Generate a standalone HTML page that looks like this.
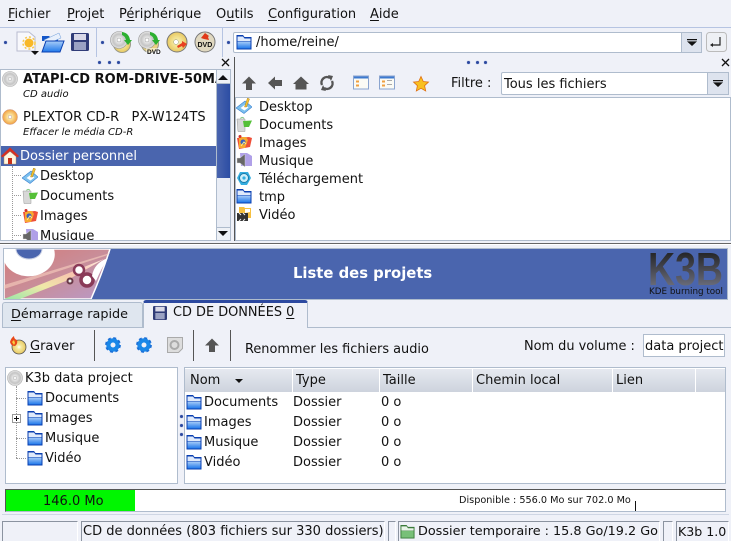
<!DOCTYPE html>
<html><head><meta charset="utf-8">
<style>
html,body{margin:0;padding:0}
body{width:731px;height:541px;overflow:hidden;background:#eff1f8;position:relative;font-family:"DejaVu Sans",sans-serif;font-size:13px;color:#111}
.t{position:absolute;white-space:pre;line-height:16px;height:16px;margin-top:1px}
.b{position:absolute;box-sizing:border-box}
.w{background:#fff;border:1px solid #afbccd}
svg.i{position:absolute;overflow:visible}
.d{position:absolute;width:3px;height:3px;border-radius:50%;background:#2c49a0;box-shadow:0 0 1px #6a80c0}
u{text-underline-offset:2px}
.hd{position:absolute;top:369px;height:23px;background:linear-gradient(#e6e9f0,#cdd3dd);border-right:1px solid #fff;box-sizing:border-box}
.ar{position:absolute;width:0;height:0;border-left:5px solid transparent;border-right:5px solid transparent}
</style></head><body>
<svg width="0" height="0" style="position:absolute">
<defs>
<linearGradient id="fb" x1="0" y1="0" x2="0" y2="1"><stop offset="0" stop-color="#a9cdf8"/><stop offset="1" stop-color="#1f78ea"/></linearGradient>
<radialGradient id="cg"><stop offset="0" stop-color="#fff"/><stop offset=".3" stop-color="#e6e6e6"/><stop offset=".7" stop-color="#c4c4c4"/><stop offset="1" stop-color="#e8e8e8"/></radialGradient>
<radialGradient id="cy"><stop offset="0" stop-color="#fff"/><stop offset=".3" stop-color="#f5e9a0"/><stop offset="1" stop-color="#e8c860"/></radialGradient>
<radialGradient id="co"><stop offset="0" stop-color="#fff"/><stop offset=".3" stop-color="#fbe6a0"/><stop offset="1" stop-color="#f0a040"/></radialGradient>
<linearGradient id="lg" x1="0" y1="0" x2="0" y2="1"><stop offset="0" stop-color="#111"/><stop offset="1" stop-color="#7c7f90"/></linearGradient>
<linearGradient id="pk" x1="0" y1="0" x2="1" y2="1"><stop offset="0" stop-color="#d47a78"/><stop offset=".5" stop-color="#c98d98"/><stop offset="1" stop-color="#b99ac8"/></linearGradient>
<linearGradient id="fl" x1="0" y1="1" x2="1" y2="0"><stop offset="0" stop-color="#9ae8a8"/><stop offset=".35" stop-color="#f0e8a8"/><stop offset=".7" stop-color="#f8c0b0"/><stop offset="1" stop-color="#fff0e0"/></linearGradient>
<symbol id="folder" viewBox="0 0 16 16"><path d="M.5 1h6.5l1.5 2H15.5v12.5H.5z" fill="#0a3fb0"/><path d="M1.5 2.5h5.5l1.5 2H14.500v2.500h-13z" fill="#dfeafb"/><path d="M1.500 7.500h13v7h-13z" fill="url(#fb)"/></symbol>
<symbol id="cd" viewBox="0 0 16 16"><circle cx="8" cy="8" r="7.5" fill="url(#cg)" stroke="#aaa" stroke-width=".6"/><circle cx="8" cy="8" r="1.800" fill="#f4f4f4" stroke="#aaa" stroke-width=".5"/></symbol>
<symbol id="cdo" viewBox="0 0 16 16"><circle cx="8" cy="8" r="7.5" fill="url(#co)" stroke="#c98" stroke-width=".5"/><circle cx="8" cy="8" r="1.800" fill="#fff" stroke="#b98" stroke-width=".5"/></symbol>
<symbol id="up" viewBox="0 0 16 16"><path d="M8 1.5L15 8.5H11V15H5V8.5H1z" fill="#555"/></symbol>
<symbol id="gear" viewBox="0 0 16 16"><circle cx="8" cy="8" r="4.600" fill="none" stroke="#1a88e8" stroke-width="4.200"/><circle cx="8" cy="8" r="7" fill="none" stroke="#1a70d8" stroke-width="1.800" stroke-dasharray="3 2.500"/></symbol>
<symbol id="dn" viewBox="0 0 10 7"><path d="M0 0h10v1.300H0zM0 2.400h10L5 7z" fill="#111"/></symbol>
<symbol id="desk" viewBox="0 0 16 16"><path d="M0 10L9 3l7 6-8 6.500z" fill="#7cc0ee" stroke="#3a80d0" stroke-width=".6"/><path d="M4.500 10l4-3 4 2.500-4 3z" fill="#fff"/><path d="M8.500 9l3-9 2 1-3 8z" fill="#f0c030" stroke="#a07010" stroke-width=".4"/></symbol>
<symbol id="docs" viewBox="0 0 16 16"><path d="M4.500 2.500a2 2 0 0 1 3.500 0" fill="none" stroke="#8c8" stroke-width="1.100"/><path d="M1 3h8v12.500H2z" fill="#d8d8d8" stroke="#999" stroke-width=".5"/><path d="M7 5l9-.5-3 6.500H8z" fill="#55c038"/></symbol>
<symbol id="imgs" viewBox="0 0 16 16"><path d="M1 4l12-1 3 1-2 9-11 2z" fill="#ef4f38"/><path d="M3 3h7l2 3-3 8H3z" fill="#f7a830"/><circle cx="7" cy="8" r="2.500" fill="#3860c0"/><circle cx="4" cy="2.500" r="1.500" fill="#d03030"/><path d="M5 12l3-4 2 2" stroke="#fe8" fill="none"/></symbol>
<symbol id="mus" viewBox="0 0 16 16"><path d="M4 1h7l5 3v10H5z" fill="#b0a0e8"/><path d="M1 6h3l5-4v13l-5-4H1z" fill="#666" stroke="#ddd" stroke-width=".4"/></symbol>
<symbol id="dl" viewBox="0 0 16 16"><path d="M1 8l3-6h8l3 6-4 7H5z" fill="#35aee0"/><circle cx="8" cy="8" r="4.500" fill="#cdeefa" stroke="#1878a8"/><circle cx="8" cy="8" r="1.600" fill="#35aee0"/></symbol>
<symbol id="vid" viewBox="0 0 16 16"><path d="M3 1h5l1 1h6v10H3z" fill="#f6c040"/><path d="M1 7h11v8H1z" fill="#333"/><path d="M3 7l2 2M7 7l2 2M3 15l2-2M7 15l2-2" stroke="#eee"/><path d="M9 3h5v3l-5 1z" fill="#fff"/></symbol>
<symbol id="home" viewBox="0 0 18 18"><path d="M9 .5L18 9l-1.500 1.500L9 4 1.500 10.500 0 9z" fill="#d83020"/><path d="M3 9.500L9 4.500l6 5V17H3z" fill="#fff6e0" stroke="#c09050" stroke-width=".4"/><path d="M7 11h4v6H7z" fill="#c83018"/></symbol>
<symbol id="win" viewBox="0 0 16 14"><rect x=".5" y=".5" width="15" height="13" fill="#fbfbf5" stroke="#8aa4cf"/><rect x="1" y="1" width="14" height="2" fill="#3d7ad0"/><path d="M3 5h3v2H3zM3 9h3v2H3z" fill="#f0a040"/></symbol>
</defs></svg>

<!-- menu -->
<span class="t" style="left:8px;top:6px"><u>F</u>ichier</span>
<span class="t" style="left:67px;top:6px"><u>P</u>rojet</span>
<span class="t" style="left:119px;top:6px">P<u>é</u>riphérique</span>
<span class="t" style="left:216px;top:6px">O<u>u</u>tils</span>
<span class="t" style="left:268px;top:6px"><u>C</u>onfiguration</span>
<span class="t" style="left:370px;top:6px"><u>A</u>ide</span>
<div class="b" style="left:0;top:27px;width:731px;height:1px;background:#b6c4e2"></div>

<!-- main toolbar -->
<div class="b" style="left:96px;top:28px;width:1px;height:29px;background:#b6c4e2"></div>
<div class="b" style="left:222px;top:28px;width:1px;height:29px;background:#b6c4e2"></div>
<div class="d" style="left:4px;top:41px"></div><div class="d" style="left:101px;top:41px"></div><div class="d" style="left:227px;top:41px"></div>
<svg class="i" style="left:16px;top:31px" width="24" height="24" viewBox="0 0 24 24"><path d="M1 1h12l6 5v14H1z" fill="#f8f8fc" stroke="#b8bcd0"/><circle cx="13" cy="12" r="4.500" fill="#f8b828"/><circle cx="13" cy="12" r="6" fill="none" stroke="#f8c848" stroke-width="1.500" stroke-dasharray="2 2"/><path d="M15 20h8l-4 4z" fill="#111"/></svg>
<svg class="i" style="left:41px;top:32px" width="23" height="21" viewBox="0 0 23 21"><path d="M1 4h7l2 2h7v3H1z" fill="#1456c8"/><path d="M3 8L18 1l2 5L6 12z" fill="#e8f0fc" stroke="#6a9ad8" stroke-width=".5"/><path d="M1 20L5 9h18l-4 11z" fill="url(#fb)" stroke="#0a3fb0"/></svg>
<svg class="i" style="left:71px;top:33px" width="18" height="18" viewBox="0 0 18 18"><rect width="18" height="18" rx="1.500" fill="#303c78"/><rect x="3" y="1" width="12" height="6" fill="#d8d8e8"/><rect x="3" y="9" width="12" height="8" fill="#9aa2c4"/></svg>
<svg class="i" style="left:110px;top:31px" width="22" height="22" viewBox="0 0 22 22"><circle cx="12" cy="13" r="8.500" fill="url(#cy)" stroke="#998"/><circle cx="9" cy="9" r="8.500" fill="url(#cg)" stroke="#999" stroke-width=".6"/><circle cx="9" cy="9" r="2" fill="#fff" stroke="#999" stroke-width=".5"/><path d="M12 1q7 1 8 8l2 0-4 5-4-5h2q-1-4-4-5z" fill="#2cb030"/></svg>
<svg class="i" style="left:138px;top:31px" width="24" height="23" viewBox="0 0 24 23"><circle cx="12" cy="13" r="8.500" fill="#e8d080" stroke="#998"/><circle cx="9" cy="9" r="8.500" fill="url(#cg)" stroke="#999" stroke-width=".6"/><circle cx="9" cy="9" r="2" fill="#fff" stroke="#999" stroke-width=".5"/><path d="M12 1q7 1 8 8l2 0-4 5-4-5h2q-1-4-4-5z" fill="#2cb030"/><rect x="8" y="17" width="15" height="6" fill="#fff" fill-opacity=".5"/><text x="9" y="23" font-family="Liberation Sans" font-weight="bold" font-size="6.500" fill="#111">DVD</text></svg>
<svg class="i" style="left:166px;top:31px" width="22" height="22" viewBox="0 0 22 22"><circle cx="11" cy="11" r="10" fill="url(#cy)" stroke="#777"/><circle cx="10" cy="11" r="2.400" fill="#fff" stroke="#997" stroke-width=".5"/><path d="M11 15l5-3 0-2 5 3-4 4-1-2-4 2z" fill="#e84020"/></svg>
<svg class="i" style="left:194px;top:31px" width="22" height="22" viewBox="0 0 22 22"><circle cx="11" cy="11" r="10" fill="#e0d8c0" stroke="#777"/><path d="M7 7l4-5 4 3-1 1 1 3-5-1z" fill="#e03818"/><text x="3.500" y="16" font-family="Liberation Sans" font-weight="bold" font-size="7" fill="#111">DVD</text></svg>

<!-- address bar -->
<div class="b w" style="left:233px;top:32px;width:469px;height:21px;border-radius:2px"></div>
<svg class="i" style="left:236px;top:34px" width="16" height="16"><use href="#folder"/></svg>
<span class="t" style="left:256px;top:34px">/home/reine/</span>
<div class="b" style="left:681px;top:32px;width:21px;height:21px;background:#dde3ee;border:1px solid #afbccd"></div>
<svg class="i" style="left:687px;top:39px" width="10" height="7"><use href="#dn"/></svg>
<svg class="i" style="left:706px;top:32px" width="21" height="20" viewBox="0 0 21 20"><rect x=".5" y=".5" width="20" height="19" rx="3" fill="#eef0f4" stroke="#bbb"/><path d="M14 5v8H6" fill="none" stroke="#222" stroke-width="1.200"/><path d="M7 11v4l-3-2z" fill="#222"/></svg>

<!-- left dock -->
<div class="d" style="left:98px;top:61px"></div><div class="d" style="left:108px;top:61px"></div><div class="d" style="left:117px;top:61px"></div>
<svg class="i" style="left:221px;top:58px" width="9" height="9"><path d="M1 1l7 7M8 1L1 8" stroke="#111" stroke-width="1.300"/></svg>
<div class="b" style="left:0;top:69px;width:231px;height:172px;background:#fff;border:1px solid #afbccd;overflow:hidden"></div>
<svg class="i" style="left:2px;top:71px" width="16" height="16"><use href="#cd"/></svg>
<span class="t" style="left:23px;top:71px;font-weight:bold;width:193px;overflow:hidden">ATAPI-CD ROM-DRIVE-50MAX</span>
<span class="t" style="left:23px;top:86px;font-style:italic;font-size:10px">CD audio</span>
<svg class="i" style="left:2px;top:109px" width="16" height="16"><use href="#cdo"/></svg>
<span class="t" style="left:23px;top:109px;font-size:13px">PLEXTOR CD-R   PX-W124TS</span>
<span class="t" style="left:23px;top:124px;font-style:italic;font-size:10px">Effacer le média CD-R</span>
<div class="b" style="left:1px;top:146px;width:215px;height:20px;background:#4a65ae"></div>
<svg class="i" style="left:1px;top:147px" width="18" height="18"><use href="#home"/></svg>
<span class="t" style="left:20px;top:148px;color:#fff">Dossier personnel</span>
<div class="b" style="left:12px;top:166px;width:0;height:74px;border-left:1px dotted #999"></div>
<div class="b" style="left:12px;top:175px;width:9px;border-top:1px dotted #999"></div>
<div class="b" style="left:12px;top:195px;width:9px;border-top:1px dotted #999"></div>
<div class="b" style="left:12px;top:215px;width:9px;border-top:1px dotted #999"></div>
<div class="b" style="left:12px;top:235px;width:9px;border-top:1px dotted #999"></div>
<svg class="i" style="left:22px;top:168px" width="16" height="16"><use href="#desk"/></svg>
<span class="t" style="left:40px;top:168px">Desktop</span>
<svg class="i" style="left:22px;top:188px" width="16" height="16"><use href="#docs"/></svg>
<span class="t" style="left:40px;top:188px">Documents</span>
<svg class="i" style="left:22px;top:208px" width="16" height="16"><use href="#imgs"/></svg>
<span class="t" style="left:40px;top:208px">Images</span>
<div class="b" style="left:1px;top:228px;width:215px;height:12px;overflow:hidden">
<svg class="i" style="left:21px;top:0" width="16" height="16"><use href="#mus"/></svg>
<span class="t" style="left:39px;top:0">Musique</span></div>
<!-- scrollbar -->
<div class="b" style="left:216px;top:70px;width:14px;height:170px;background:#e9edf5;border-left:1px solid #afbccd"></div>
<div class="b" style="left:217px;top:84px;width:13px;height:94px;background:linear-gradient(90deg,#4a65ae,#2c4da4)"></div>
<div class="b" style="left:217px;top:70px;width:13px;height:14px;background:#eef1f6;border-bottom:1px solid #afbccd"></div>
<div class="ar" style="left:218px;top:75px;border-bottom:5px solid #111"></div>
<div class="b" style="left:217px;top:227px;width:13px;height:13px;background:#eef1f6;border-top:1px solid #afbccd"></div>
<div class="ar" style="left:218px;top:231px;border-top:5px solid #111"></div>

<!-- right dock -->
<div class="b" style="left:234px;top:57px;width:1px;height:184px;background:#555"></div>
<div class="d" style="left:467px;top:61px"></div><div class="d" style="left:476px;top:61px"></div><div class="d" style="left:484px;top:61px"></div>
<svg class="i" style="left:721px;top:58px" width="9" height="9"><path d="M1 1l7 7M8 1L1 8" stroke="#111" stroke-width="1.300"/></svg>
<svg class="i" style="left:241px;top:75px" width="16" height="16"><use href="#up"/></svg>
<svg class="i" style="left:267px;top:75px" width="16" height="16" viewBox="0 0 16 16"><path d="M1 8L8 1.500V5H15V11H8V14.500z" fill="#555"/></svg>
<svg class="i" style="left:293px;top:75px" width="16" height="16" viewBox="0 0 16 16"><path d="M8 1.500L16 9h-2.500v5.500H2.500V9H0z" fill="#555"/></svg>
<svg class="i" style="left:319px;top:75px" width="16" height="16" viewBox="0 0 16 16"><path d="M3 10A5.500 5.500 0 0 1 11 3M13 6A5.500 5.500 0 0 1 5 13" fill="none" stroke="#555" stroke-width="2.400"/><path d="M9 0l5 1-2 5zM7 16l-5-1 2-5z" fill="#555"/></svg>
<svg class="i" style="left:353px;top:75px" width="16" height="15"><use href="#win"/></svg>
<svg class="i" style="left:379px;top:75px" width="16" height="15" viewBox="0 0 16 14"><use href="#win" width="16" height="14"/><path d="M8 5h5M8 9h5" stroke="#aaa"/></svg>
<svg class="i" style="left:413px;top:76px" width="16" height="16" viewBox="0 0 16 16"><path d="M8 .5l2.300 5 5.200.6-3.900 3.600 1.100 5.300L8 12.300 3.300 15l1.100-5.300L.5 6.100l5.200-.6z" fill="#f8c020" stroke="#e07010" stroke-width=".8"/></svg>
<span class="t" style="left:451px;top:75px">Filtre :</span>
<div class="b w" style="left:501px;top:72px;width:228px;height:23px;border-radius:2px"></div>
<span class="t" style="left:504px;top:76px">Tous les fichiers</span>
<div class="b" style="left:707px;top:72px;width:22px;height:23px;background:#dde3ee;border:1px solid #afbccd"></div>
<svg class="i" style="left:713px;top:80px" width="10" height="7"><use href="#dn"/></svg>

<div class="b" style="left:235px;top:97px;width:496px;height:144px;background:#fff;border:1px solid #afbccd"></div>
<svg class="i" style="left:236px;top:98px" width="16" height="16"><use href="#desk"/></svg><span class="t" style="left:259px;top:99px">Desktop</span>
<svg class="i" style="left:236px;top:116px" width="16" height="16"><use href="#docs"/></svg><span class="t" style="left:259px;top:117px">Documents</span>
<svg class="i" style="left:236px;top:134px" width="16" height="16"><use href="#imgs"/></svg><span class="t" style="left:259px;top:135px">Images</span>
<svg class="i" style="left:236px;top:152px" width="16" height="16"><use href="#mus"/></svg><span class="t" style="left:259px;top:153px">Musique</span>
<svg class="i" style="left:236px;top:170px" width="16" height="16"><use href="#dl"/></svg><span class="t" style="left:259px;top:171px">Téléchargement</span>
<svg class="i" style="left:236px;top:188px" width="16" height="16"><use href="#folder"/></svg><span class="t" style="left:259px;top:189px">tmp</span>
<svg class="i" style="left:236px;top:206px" width="16" height="16"><use href="#vid"/></svg><span class="t" style="left:259px;top:207px">Vidéo</span>

<!-- splitter -->
<div class="b" style="left:0;top:243px;width:731px;height:2px;background:#666;border-bottom:1px solid #fff"></div>

<!-- banner -->
<div class="b" style="left:3px;top:248px;width:725px;height:52px;border:1px solid #afbccd;background:#4a65ae;overflow:hidden">
<svg style="position:absolute;left:0;top:0" width="110" height="50" viewBox="0 0 110 50">
<path d="M0 0H106Q98 25 87 50H0z" fill="url(#pk)" stroke="#fff" stroke-width="1.500"/>
<path d="M0 50L100 10 62 32 16 50z" fill="url(#fl)"/>
<path d="M0 36L106 4 104 6 0 40z" fill="#f8d0c0" opacity=".6"/>
<path d="M0 0H50A26 22 0 0 1 0 12z" fill="#fff"/>
<path d="M12 0H38A13 10 0 0 1 12 0z" fill="#4a65ae" stroke="#c8cfe4"/>
<circle cx="75" cy="21" r="5" fill="#fff" stroke="#8a3a58" stroke-width="2.500"/>
<circle cx="83" cy="31" r="6" fill="#fff" stroke="#8a3a58" stroke-width="3.500"/>
<circle cx="66" cy="32" r="2.500" fill="#eee" stroke="#6a3a48" stroke-width="2"/>
<path d="M88 27Q90 14 104 9 97 20 92 32z" fill="#fff"/>
</svg>
<svg style="position:absolute;right:2px;top:0" width="78" height="50" viewBox="0 0 78 50"><text x="1" y="36" font-family="Liberation Sans" font-weight="bold" font-size="46" textLength="75" lengthAdjust="spacingAndGlyphs" fill="url(#lg)">K3B</text><text x="2" y="45" font-family="DejaVu Sans" font-size="9" textLength="74" lengthAdjust="spacingAndGlyphs" fill="#111">KDE burning tool</text></svg>
</div>
<span class="t" style="left:293px;top:265px;font-weight:bold;font-size:14.800px;color:#fff">Liste des projets</span>

<!-- tabs -->
<div class="b" style="left:2px;top:302px;width:141px;height:25px;background:#dfe6ef;border:1px solid #afbccd;border-bottom:none;border-radius:3px 3px 0 0"></div>
<span class="t" style="left:11px;top:306px;font-size:12.800px"><u>D</u>émarrage rapide</span>
<div class="b" style="left:143px;top:300px;width:165px;height:28px;background:#eff1f8;border:1px solid #afbccd;border-top:3px solid #2c49a0;border-bottom:none;border-radius:3px 3px 0 0"></div>
<div class="b" style="left:2px;top:327px;width:141px;height:1px;background:#afbccd"></div>
<div class="b" style="left:308px;top:327px;width:423px;height:1px;background:#afbccd"></div>
<svg class="i" style="left:153px;top:306px" width="14" height="14" viewBox="0 0 18 18"><rect width="18" height="18" rx="1.500" fill="#303c78"/><rect x="3" y="1" width="12" height="6" fill="#d8d8e8"/><rect x="3" y="9" width="12" height="8" fill="#9aa2c4"/></svg>
<span class="t" style="left:173px;top:304px;font-size:12.900px">CD DE DONNÉES <u>0</u></span>

<!-- project toolbar -->
<svg class="i" style="left:9px;top:336px" width="18" height="18" viewBox="0 0 18 18"><circle cx="10" cy="11" r="7" fill="url(#cy)" stroke="#555" stroke-width=".8"/><path d="M1 6Q2 2 5 0q0 3 3 4 1 4-2 6Q2 10 1 6z" fill="#e84818"/><path d="M3 6l2-2 1 3-1 2z" fill="#f8d040"/></svg>
<span class="t" style="left:30px;top:338px"><u>G</u>raver</span>
<div class="b" style="left:94px;top:330px;width:1px;height:31px;background:#555"></div>
<div class="b" style="left:193px;top:330px;width:1px;height:31px;background:#555"></div>
<div class="b" style="left:230px;top:330px;width:1px;height:31px;background:#555"></div>
<svg class="i" style="left:105px;top:337px" width="16" height="16"><use href="#gear"/></svg>
<svg class="i" style="left:136px;top:337px" width="16" height="16"><use href="#gear"/></svg>
<svg class="i" style="left:167px;top:337px" width="16" height="16" viewBox="0 0 16 16"><path d="M.5.5h15v11l-4 4H.5z" fill="#ddd" stroke="#aaa"/><circle cx="7.500" cy="8" r="4" fill="none" stroke="#aaa" stroke-width="2"/></svg>
<svg class="i" style="left:204px;top:337px" width="16" height="16"><use href="#up"/></svg>
<span class="t" style="left:245px;top:341px;font-size:12.900px">Renommer les fichiers audio</span>
<span class="t" style="left:524px;top:338px;font-size:12.900px">Nom du volume :</span>
<div class="b w" style="left:643px;top:334px;width:82px;height:23px"></div>
<span class="t" style="left:645px;top:338px">data project</span>

<!-- tree -->
<div class="b w" style="left:5px;top:367px;width:173px;height:117px"></div>
<svg class="i" style="left:7px;top:370px" width="16" height="16"><use href="#cd"/></svg>
<span class="t" style="left:25px;top:370px">K3b data project</span>
<div class="b" style="left:16px;top:386px;height:72px;border-left:1px dotted #999"></div>
<div class="b" style="left:16px;top:398px;width:10px;border-top:1px dotted #999"></div>
<div class="b" style="left:16px;top:438px;width:10px;border-top:1px dotted #999"></div>
<div class="b" style="left:16px;top:458px;width:10px;border-top:1px dotted #999"></div>
<svg class="i" style="left:12px;top:414px" width="9" height="9"><rect x=".5" y=".5" width="8" height="8" fill="#fff" stroke="#999"/><path d="M2 4.500h5M4.500 2v5" stroke="#111"/></svg>
<svg class="i" style="left:27px;top:390px" width="16" height="16"><use href="#folder"/></svg><span class="t" style="left:45px;top:390px">Documents</span>
<svg class="i" style="left:27px;top:410px" width="16" height="16"><use href="#folder"/></svg><span class="t" style="left:45px;top:410px">Images</span>
<svg class="i" style="left:27px;top:430px" width="16" height="16"><use href="#folder"/></svg><span class="t" style="left:45px;top:430px">Musique</span>
<svg class="i" style="left:27px;top:450px" width="16" height="16"><use href="#folder"/></svg><span class="t" style="left:45px;top:450px">Vidéo</span>
<div class="d" style="left:180px;top:415px"></div><div class="d" style="left:180px;top:424px"></div><div class="d" style="left:180px;top:433px"></div>

<!-- list -->
<div class="b w" style="left:184px;top:367px;width:542px;height:117px"></div>
<div class="hd" style="left:185px;width:108px"></div>
<div class="hd" style="left:293px;width:87px"></div>
<div class="hd" style="left:380px;width:93px"></div>
<div class="hd" style="left:473px;width:140px"></div>
<div class="hd" style="left:613px;width:83px"></div>
<div class="hd" style="left:696px;width:29px;border-right:none"></div>
<span class="t" style="left:190px;top:372px">Nom</span>
<div class="ar" style="left:235px;top:379px;border-left-width:4px;border-right-width:4px;border-top:4px solid #111"></div>
<span class="t" style="left:296px;top:372px">Type</span>
<span class="t" style="left:383px;top:372px">Taille</span>
<span class="t" style="left:476px;top:372px">Chemin local</span>
<span class="t" style="left:616px;top:372px">Lien</span>
<svg class="i" style="left:186px;top:394px" width="16" height="16"><use href="#folder"/></svg><span class="t" style="left:204px;top:394px">Documents</span><span class="t" style="left:293px;top:394px">Dossier</span><span class="t" style="left:381px;top:394px">0 o</span>
<svg class="i" style="left:186px;top:414px" width="16" height="16"><use href="#folder"/></svg><span class="t" style="left:204px;top:414px">Images</span><span class="t" style="left:293px;top:414px">Dossier</span><span class="t" style="left:381px;top:414px">0 o</span>
<svg class="i" style="left:186px;top:434px" width="16" height="16"><use href="#folder"/></svg><span class="t" style="left:204px;top:434px">Musique</span><span class="t" style="left:293px;top:434px">Dossier</span><span class="t" style="left:381px;top:434px">0 o</span>
<svg class="i" style="left:186px;top:454px" width="16" height="16"><use href="#folder"/></svg><span class="t" style="left:204px;top:454px">Vidéo</span><span class="t" style="left:293px;top:454px">Dossier</span><span class="t" style="left:381px;top:454px">0 o</span>

<!-- progress -->
<div class="b" style="left:5px;top:489px;width:721px;height:23px;background:#fff;border-top:1px solid #555;border-left:1px solid #555;border-right:1px solid #afbccd;border-bottom:1px solid #afbccd"></div>
<div class="b" style="left:6px;top:490px;width:129px;height:21px;background:#00f600"></div>
<span class="t" style="left:43px;top:493px">146.0 Mo</span>
<span class="t" style="left:459px;top:492px;font-size:9.700px">Disponible : 556.0 Mo sur 702.0 Mo</span>
<div class="b" style="left:635px;top:501px;width:1px;height:10px;background:#111"></div>
<div class="b" style="left:2px;top:514px;width:727px;height:1px;background:#cfd6e4"></div>

<!-- status -->
<div class="b" style="left:2px;top:521px;width:76px;height:20px;border:1px solid #8b93a0;border-bottom:none;border-right-color:#fff"></div>
<div class="b" style="left:81px;top:521px;width:304px;height:20px;border:1px solid #8b93a0;border-bottom:none;border-right-color:#fff"></div>
<span class="t" style="left:83px;top:523px">CD de données (803 fichiers sur 330 dossiers)</span>
<div class="b" style="left:388px;top:521px;width:8px;height:20px;border:1px solid #8b93a0;border-bottom:none;border-right-color:#fff"></div>
<div class="b" style="left:398px;top:521px;width:262px;height:20px;border:1px solid #8b93a0;border-bottom:none;border-right-color:#fff"></div>
<svg class="i" style="left:400px;top:524px" width="15" height="15" viewBox="0 0 16 16"><path d="M.5 1h6.500l1.500 2H15.500v12.500H.5z" fill="#3a7a3a"/><path d="M1.500 2.500h5.500l1.500 2H14.500v2.500h-13z" fill="#e8f4e8"/><path d="M1.500 7.500h13v7h-13z" fill="#78c078"/></svg>
<span class="t" style="left:418px;top:523px;font-size:12.800px">Dossier temporaire : 15.8 Go/19.2 Go</span>
<div class="b" style="left:663px;top:521px;width:10px;height:20px;border:1px solid #8b93a0;border-bottom:none;border-right-color:#fff"></div>
<div class="b" style="left:676px;top:521px;width:53px;height:20px;border:1px solid #8b93a0;border-bottom:none;border-right-color:#fff"></div>
<span class="t" style="left:678px;top:523px;font-size:12.600px">K3b 1.0</span>
</body></html>
